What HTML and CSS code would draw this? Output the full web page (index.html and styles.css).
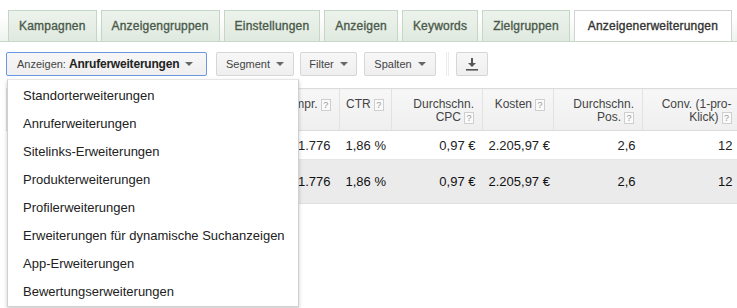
FILE: index.html
```html
<!DOCTYPE html>
<html lang="de">
<head>
<meta charset="utf-8">
<title>Anzeigenerweiterungen</title>
<link rel="stylesheet" href="styles.css">
</head>
<body>
<div class="page">
  <div class="tabs">
    <div class="tab">Kampagnen</div>
    <div class="tab">Anzeigengruppen</div>
    <div class="tab">Einstellungen</div>
    <div class="tab">Anzeigen</div>
    <div class="tab">Keywords</div>
    <div class="tab">Zielgruppen</div>
    <div class="tab active">Anzeigenerweiterungen</div>
  </div>

  <div class="toolbar">
    <button class="btn btn-view">Anzeigen: <b>Anruferweiterungen</b><span class="caret"></span></button>
    <button class="btn btn-seg">Segment<span class="caret"></span></button>
    <button class="btn btn-filter">Filter<span class="caret"></span></button>
    <button class="btn btn-cols">Spalten<span class="caret"></span></button>
    <span class="sep"></span>
    <button class="btn btn-dl" aria-label="Herunterladen">
      <svg width="12" height="13" viewBox="0 0 12 13"><path d="M5 0h2v5h3l-4 4-4-4h3z" fill="#555"/><rect x="0" y="11" width="12" height="1.6" fill="#555"/></svg>
    </button>
  </div>

  <div class="grid-wrap">
    <div class="grid-clip">
      <table class="grid">
        <colgroup>
          <col class="c-name"><col class="c-impr"><col class="c-ctr"><col class="c-cpc"><col class="c-cost"><col class="c-pos"><col class="c-conv">
        </colgroup>
        <thead>
          <tr>
            <th class="left">Anruferweiterung</th>
            <th class="impr">Impr.<i class="q">?</i></th>
            <th>CTR<i class="q">?</i></th>
            <th>Durchschn.<br>CPC<i class="q">?</i></th>
            <th>Kosten<i class="q">?</i></th>
            <th>Durchschn.<br>Pos.<i class="q">?</i></th>
            <th>Conv. (1-pro-<br>Klick)<i class="q">?</i></th>
          </tr>
        </thead>
        <tbody>
          <tr class="row">
            <td class="left">+49 30 1234567</td>
            <td class="impr">21.776</td>
            <td>1,86 %</td>
            <td>0,97 €</td>
            <td>2.205,97 €</td>
            <td>2,6</td>
            <td>12</td>
          </tr>
          <tr class="total">
            <td class="left">Gesamt</td>
            <td class="impr">21.776</td>
            <td>1,86 %</td>
            <td>0,97 €</td>
            <td>2.205,97 €</td>
            <td>2,6</td>
            <td>12</td>
          </tr>
        </tbody>
      </table>
    </div>

    <ul class="menu">
      <li>Standorterweiterungen</li>
      <li>Anruferweiterungen</li>
      <li>Sitelinks-Erweiterungen</li>
      <li>Produkterweiterungen</li>
      <li>Profilerweiterungen</li>
      <li>Erweiterungen für dynamische Suchanzeigen</li>
      <li>App-Erweiterungen</li>
      <li>Bewertungserweiterungen</li>
    </ul>
  </div>
</div>
</body>
</html>
```

FILE: styles.css
```css
html, body {
  margin: 0;
  padding: 0;
  background: #fff;
  overflow: hidden;
}
body {
  font-family: "Liberation Sans", Arial, sans-serif;
  color: #222;
  width: 737px;
  height: 308px;
}
.page {
  width: 737px;
}

/* Tabs */
.tabs {
  display: flex;
  gap: 4px;
  padding: 10px 0 0 8px;
  height: 31px;
  border-bottom: 1px solid #c9d7c9;
  background: linear-gradient(#fff 0%, #fff 40%, #eef3ee 100%);
  overflow: hidden;
}
.tab {
  height: 31px;
  box-sizing: border-box;
  padding: 0 10px;
  line-height: 30px;
  font-size: 12px;
  font-weight: normal;
  letter-spacing: 0.2px;
  -webkit-text-stroke: 0.35px #4a5a4a;
  color: #4a5a4a;
  background: linear-gradient(#ecf3ec, #e0e9e0);
  border: 1px solid #c6d6c6;
  border-bottom: none;
  white-space: nowrap;
  flex: none;
}
.tab.active {
  background: #fff;
  color: #333;
  -webkit-text-stroke: 0.35px #333;
  border-color: #d2d2d2;
  height: 32px;
  margin-bottom: -1px;
  padding: 0 13px;
}

/* Toolbar */
.toolbar {
  display: flex;
  align-items: center;
  padding: 10px 0 0 6px;
  height: 24px;
}
.btn {
  height: 24px;
  box-sizing: border-box;
  font-family: "Liberation Sans", Arial, sans-serif;
  font-size: 11px;
  color: #444;
  background: linear-gradient(#f7f7f7, #efefef);
  border: 1px solid #d6d6d6;
  border-radius: 2px;
  padding: 0 10px;
  display: inline-flex;
  align-items: center;
  white-space: nowrap;
}
.btn b {
  color: #222;
  font-size: 12px;
  letter-spacing: -0.2px;
  margin-left: 3px;
}
.caret {
  display: inline-block;
  width: 0;
  height: 0;
  border-left: 4px solid transparent;
  border-right: 4px solid transparent;
  border-top: 4px solid #666;
  margin-left: 6px;
}
.btn-view {
  width: 201px;
  border-color: #6b97e0;
  padding: 0 10px;
}
.btn-seg { margin-left: 9px; width: 78px; justify-content: center; }
.btn-filter { margin-left: 6px; width: 57px; justify-content: center; }
.btn-cols { margin-left: 7px; width: 72px; justify-content: center; }
.sep {
  width: 3px;
  height: 24px;
  margin: 0 7px 0 10px;
  border-left: 1px solid #ececec;
  border-right: 1px solid #ececec;
  box-sizing: border-box;
}
.btn-dl { width: 32px; justify-content: center; padding: 0; }

/* Table */
.grid-wrap {
  position: relative;
  margin-top: 12px;
  padding-left: 6px;
}
.grid-clip {
  width: 731px;
  overflow: hidden;
}
.grid {
  border-collapse: collapse;
  table-layout: fixed;
  width: 733px;
  font-size: 13px;
}
.c-name { width: 284px; }
.c-impr { width: 49px; }
.c-ctr { width: 52px; }
.c-cpc { width: 91px; }
.c-cost { width: 71px; }
.c-pos { width: 89px; }
.c-conv { width: 97px; }

.grid th {
  height: 42px;
  box-sizing: border-box;
  vertical-align: top;
  text-align: right;
  font-weight: normal;
  font-size: 12px;
  line-height: 13px;
  color: #444;
  padding: 9px 8px 0 6px;
  background: linear-gradient(#f7f7f7, #efefef);
  border-top: 1px solid #dcdcdc;
  border-bottom: 1px solid #dcdcdc;
  border-left: 1px solid #e2e2e2;
  white-space: nowrap;
}
.grid th.left, .grid td.left { text-align: left; }
.grid th.impr { padding-right: 10px; padding-left: 0; }
.q {
  display: inline-block;
  font-style: normal;
  width: 8px;
  height: 10px;
  line-height: 10px;
  margin-left: 3px;
  border: 1px solid #cfcfcf;
  background: #fafafa;
  color: #999;
  font-size: 9px;
  text-align: center;
  vertical-align: top;
  margin-top: 1px;
}
.grid td {
  text-align: right;
  padding: 0 7px 0 6px;
  color: #222;
  white-space: nowrap;
  overflow: hidden;
}
.grid td.impr { padding-right: 9px; padding-left: 0; overflow: visible; }
.row td {
  height: 28px;
  border-bottom: 1px solid #e6e6e6;
}
.total td {
  height: 43px;
  background: #ebebeb;
  color: #111;
  border-bottom: 1px solid #e0e0e0;
}

/* Dropdown menu */
.menu {
  position: absolute;
  left: 7px;
  top: -9px;
  width: 292px;
  margin: 0;
  padding: 2px 0 0;
  list-style: none;
  background: #fff;
  border: 1px solid #d0d0d0;
  border-top-color: #e6e6e6;
  box-shadow: 0 2px 4px rgba(0, 0, 0, 0.2);
  box-sizing: border-box;
  font-size: 13px;
  color: #222;
}
.menu li {
  height: 28px;
  line-height: 28px;
  padding-left: 15px;
  white-space: nowrap;
}
```
